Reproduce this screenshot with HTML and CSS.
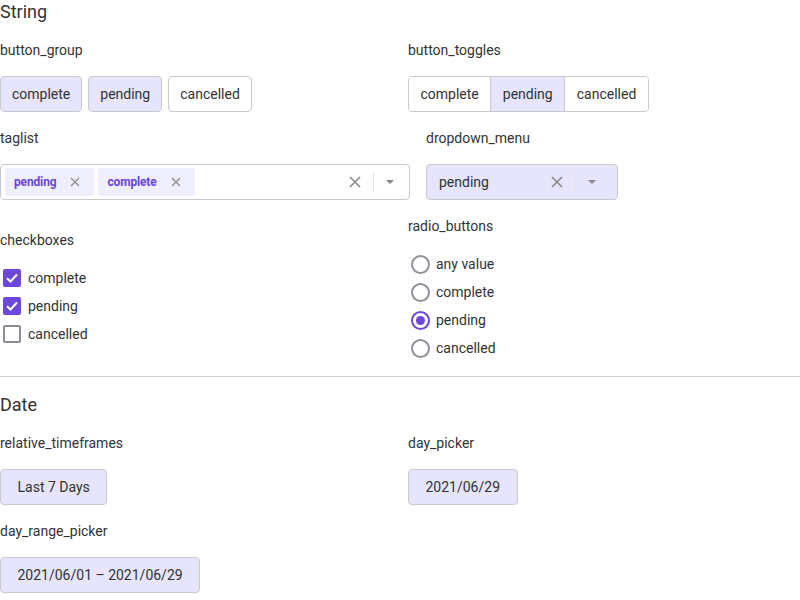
FILE: index.html
```html
<!DOCTYPE html>
<html>
<head>
<meta charset="utf-8">
<link rel="stylesheet" href="styles.css">
</head>
<body>
<section class="section">
  <h2 class="section-title">String</h2>
  <div class="cols">
    <div class="col col-left">
      <div class="field">
        <div class="label">button_group</div>
        <div class="btn-group">
          <button class="btn selected">complete</button>
          <button class="btn selected">pending</button>
          <button class="btn">cancelled</button>
        </div>
      </div>
      <div class="field field-taglist">
        <div class="label">taglist</div>
        <div class="taglist">
          <div class="tags">
            <span class="tag">pending<svg class="tag-x" viewBox="0 0 10 10"><path d="M1 1L9 9M9 1L1 9"/></svg></span>
            <span class="tag">complete<svg class="tag-x" viewBox="0 0 10 10"><path d="M1 1L9 9M9 1L1 9"/></svg></span>
          </div>
          <div class="indicators">
            <svg class="clear-x" viewBox="0 0 12 12"><path d="M1 1L11 11M11 1L1 11"/></svg>
            <span class="sep"></span>
            <svg class="caret" viewBox="0 0 8 4"><path d="M0 0H8L4 4Z"/></svg>
          </div>
        </div>
      </div>
      <div class="field">
        <div class="label">checkboxes</div>
        <div class="options">
          <div class="option"><span class="checkbox checked"><svg viewBox="0 0 18 18"><path d="M4 9.2L7.5 12.5L14 5.5"/></svg></span>complete</div>
          <div class="option"><span class="checkbox checked"><svg viewBox="0 0 18 18"><path d="M4 9.2L7.5 12.5L14 5.5"/></svg></span>pending</div>
          <div class="option"><span class="checkbox"></span>cancelled</div>
        </div>
      </div>
    </div>
    <div class="col col-right">
      <div class="field">
        <div class="label">button_toggles</div>
        <div class="toggles">
          <button class="toggle">complete</button>
          <button class="toggle selected">pending</button>
          <button class="toggle">cancelled</button>
        </div>
      </div>
      <div class="field field-dropdown">
        <div class="label">dropdown_menu</div>
        <div class="dropdown">
          <span class="dropdown-value">pending</span>
          <div class="indicators">
            <svg class="clear-x" viewBox="0 0 12 12"><path d="M1 1L11 11M11 1L1 11"/></svg>
            <span class="sep"></span>
            <svg class="caret" viewBox="0 0 8 4"><path d="M0 0H8L4 4Z"/></svg>
          </div>
        </div>
      </div>
      <div class="field">
        <div class="label">radio_buttons</div>
        <div class="options">
          <div class="option"><span class="radio"></span>any value</div>
          <div class="option"><span class="radio"></span>complete</div>
          <div class="option"><span class="radio checked"></span>pending</div>
          <div class="option"><span class="radio"></span>cancelled</div>
        </div>
      </div>
    </div>
  </div>
</section>
<hr class="divider">
<section class="section">
  <h2 class="section-title">Date</h2>
  <div class="cols">
    <div class="col col-left">
      <div class="field">
        <div class="label">relative_timeframes</div>
        <div><button class="btn selected wide">Last 7 Days</button></div>
      </div>
      <div class="field">
        <div class="label">day_range_picker</div>
        <div><button class="btn selected wide">2021/06/01 – 2021/06/29</button></div>
      </div>
    </div>
    <div class="col col-right">
      <div class="field">
        <div class="label">day_picker</div>
        <div><button class="btn selected wide">2021/06/29</button></div>
      </div>
    </div>
  </div>
</section>
</body>
</html>
```

FILE: styles.css
```css
* { box-sizing: border-box; }
html, body { margin: 0; padding: 0; background: #fff; }
body {
  font-family: Roboto, "Liberation Sans", sans-serif;
  font-size: 14px;
  color: #333;
}
.section-title {
  margin: 0 0 16px 0;
  font-size: 18px;
  line-height: 24px;
  font-weight: 400;
  color: #333;
}
.cols { display: flex; }
.col { display: flex; flex-direction: column; gap: 16px; }
.col-left { width: 408px; flex: none; }
.col-right { flex: 1; }
.label { line-height: 20px; height: 20px; margin-bottom: 16px; }
.field-taglist { margin-bottom: 14px; }
.field-dropdown { margin-left: 18px; }

.btn-group { display: flex; gap: 6px; }
.btn {
  height: 36px;
  padding: 0 11px;
  border: 1px solid #c9c9d2;
  border-radius: 4px;
  background: #fff;
  font-family: inherit;
  font-size: 14px;
  color: #333;
}
.btn.selected { background: #e6e5fb; }
.btn.wide { padding: 0 16.5px; }

.toggles { display: inline-flex; height: 36px; border: 1px solid #c9c9d2; border-radius: 4px; overflow: hidden; }
.toggle {
  border: 0;
  border-left: 1px solid #c9c9d2;
  background: #fff;
  padding: 0 11.5px;
  font-family: inherit;
  font-size: 14px;
  color: #333;
}
.toggle:first-child { border-left: 0; }
.toggle.selected { background: #e6e5fb; }

.taglist {
  width: 410px;
  height: 36px;
  border: 1px solid #c9c9d2;
  border-radius: 4px;
  display: flex;
  align-items: center;
  justify-content: space-between;
  padding: 0 15px 0 4px;
}
.tags { display: flex; gap: 4px; }
.tag {
  height: 28px;
  display: inline-flex;
  align-items: center;
  padding: 0 14px 0 9px;
  background: #efeefc;
  border-radius: 3px;
  font-weight: 700;
  font-size: 12px;
  letter-spacing: -0.15px;
  color: #6a44d4;
}
.tag-x { width: 10px; height: 10px; margin-left: 14px; stroke: #8a8a8a; stroke-width: 1.2; fill: none; }
.indicators { display: flex; align-items: center; }
.clear-x { width: 12px; height: 12px; stroke: #888; stroke-width: 1.6; fill: none; }
.sep { width: 1px; height: 20px; background: #e2e2e2; margin: 0 12px; }
.caret { width: 8px; height: 4px; fill: #888; }

.dropdown {
  width: 192px;
  height: 36px;
  border: 1px solid #c9c9d2;
  border-radius: 4px;
  background: #e6e5fb;
  display: flex;
  align-items: center;
  justify-content: space-between;
  padding: 0 21px 0 12px;
}
.dropdown-value { color: #333; }

.options { display: flex; flex-direction: column; margin-top: -2px; }
.option { height: 28px; display: flex; align-items: center; }
.checkbox {
  width: 18px; height: 18px;
  margin: 0 7px 0 3px;
  border: 2px solid #8c8c94;
  border-radius: 2px;
  display: inline-flex;
}
.checkbox.checked { background: #6c47d9; border-color: #6c47d9; }
.checkbox svg { width: 18px; height: 18px; margin: -2px; stroke: #fff; stroke-width: 2; fill: none; }
.radio {
  width: 19px; height: 19px;
  margin: 0 6px 0 3px;
  border: 2px solid #8f9299;
  border-radius: 50%;
  position: relative;
}
.radio.checked { border-color: #6c47d9; }
.radio.checked::after {
  content: "";
  position: absolute;
  left: 3px; top: 3px;
  width: 9px; height: 9px;
  border-radius: 50%;
  background: #6c47d9;
}

.divider { margin: 14px 0 16px 0; border: 0; border-top: 1px solid #cfcfd4; }
```
